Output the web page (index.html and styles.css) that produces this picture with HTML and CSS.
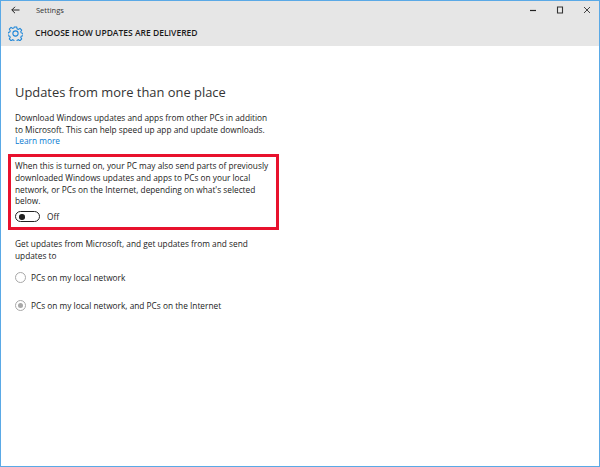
FILE: index.html
```html
<!DOCTYPE html>
<html lang="en">
<head>
<meta charset="utf-8">
<title>Settings</title>
<link rel="stylesheet" href="styles.css">
</head>
<body>
<div class="window">
  <header class="top">
    <div class="titlebar">
      <div class="title-left">
        <svg class="back" width="9" height="8" viewBox="0 0 9 8"><path d="M4 .8.8 4 4 7.200M.8 4H8.500" fill="none" stroke="#222" stroke-width="1"/></svg>
        <span class="app">Settings</span>
      </div>
      <div class="controls">
        <svg width="8" height="8" viewBox="0 0 8 8"><path d="M1 4.500h6" stroke="#222" stroke-width="1.200"/></svg>
        <svg width="8" height="8" viewBox="0 0 8 8"><path d="M1.500 1h5v6h-5z" fill="#fff" fill-opacity=".2" stroke="#333" stroke-width="1.100"/></svg>
        <svg width="8" height="8" viewBox="0 0 8 8"><path d="M1 1l6 6M7 1 1 7" stroke="#444" stroke-width="1"/></svg>
      </div>
    </div>
    <div class="heading-row">
      <svg class="gear" width="15" height="15" viewBox="0 0 16 16"><path d="M6.700 1h2.600l.4 2 1.300.6 1.800-1.100 1.800 1.900-1 1.700.5 1.300 2 .5v2.400l-2 .5-.5 1.300 1 1.700-1.800 1.900-1.800-1.100-1.300.6-.4 2H6.700l-.4-2-1.300-.6-1.800 1.100-1.800-1.900 1-1.700-.5-1.300-2-.5V6.900l2-.5.5-1.300-1-1.700 1.800-1.900 1.800 1.100 1.300-.6z" fill="none" stroke="#1a84d8" stroke-width="1.100"/><circle cx="8" cy="8" r="2.800" fill="none" stroke="#1a84d8" stroke-width="1.100"/></svg>
      <h1 class="heading">CHOOSE HOW UPDATES ARE DELIVERED</h1>
    </div>
  </header>
  <main class="content">
    <h2 class="section">Updates from more than one place</h2>
    <p class="text">Download Windows updates and apps from other PCs in addition<br>to Microsoft. This can help speed up app and update downloads.<br><a class="link" href="#">Learn more</a></p>
    <div class="highlight">
      <p class="text">When this is turned on, your PC may also send parts of previously<br>downloaded Windows updates and apps to PCs on your local<br>network, or PCs on the Internet, depending on what's selected<br>below.</p>
      <div class="toggle-row">
        <span class="toggle"><span class="knob"></span></span>
        <span class="text">Off</span>
      </div>
    </div>
    <p class="text">Get updates from Microsoft, and get updates from and send<br>updates to</p>
    <div class="radios">
      <div class="radio-row"><span class="radio"></span><span class="text">PCs on my local network</span></div>
      <div class="radio-row"><span class="radio checked"></span><span class="text">PCs on my local network, and PCs on the Internet</span></div>
    </div>
  </main>
</div>
</body>
</html>
```
FILE: styles.css
```css
* { box-sizing: border-box; margin: 0; padding: 0; }
html, body { width: 600px; height: 467px; overflow: hidden; background: #fff; }
body { font-family: "Open Sans", "Noto Sans", sans-serif; color: #222; }
.window { width: 600px; height: 467px; border: 1px solid #5aa9e6; display: flex; flex-direction: column; }
.top { background: #e6e6e6; height: 45px; display: flex; flex-direction: column; }
.titlebar { height: 17px; display: flex; justify-content: space-between; align-items: center; padding: 0 8px 0 10px; }
.title-left { display: flex; align-items: center; gap: 16px; }
.back { display: block; }
.app { font-size: 7.500px; color: #333; }
.controls { display: flex; gap: 19px; align-items: center; }
.controls svg { display: block; }
.heading-row { display: flex; align-items: center; gap: 12px; padding: 7px 0 0 7px; }
.gear { display: block; flex: none; }
.heading { font-size: 8.500px; font-weight: 600; color: #1a1a1a; line-height: 16px; }
.content { padding: 37px 0 0 14px; }
.section { font-size: 12.900px; font-weight: 400; line-height: 19px; color: #333; margin-bottom: 10px; }
.text { font-size: 8.300px; line-height: 11.700px; color: #222; }
.link { color: #0a7ad1; text-decoration: none; }
.highlight { width: 271px; height: 76px; margin: 7px 0 8px -7px; padding: 3px 0 0 4px; border: 3px solid #e8112d; }
.toggle-row { display: flex; align-items: center; gap: 7px; margin-top: 4px; }
.toggle { width: 25px; height: 11px; border: 1px solid #222; border-radius: 6px; display: flex; align-items: center; padding-left: 3px; }
.knob { width: 5.500px; height: 5.500px; border-radius: 50%; background: #222; }
.radios { display: flex; flex-direction: column; gap: 16px; margin-top: 10px; }
.radio-row { display: flex; align-items: center; gap: 5px; height: 12px; }
.radio { width: 11px; height: 11px; border: 1px solid #a8a8a8; border-radius: 50%; display: flex; align-items: center; justify-content: center; }
.radio.checked::after { content: ""; width: 5.500px; height: 5.500px; border-radius: 50%; background: #a8a8a8; }
```
